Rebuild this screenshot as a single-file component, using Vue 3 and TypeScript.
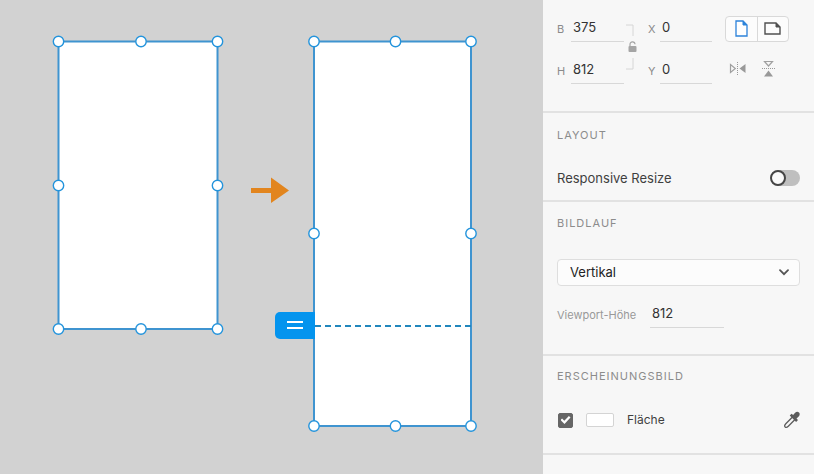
<script setup lang="ts">
import { ref } from 'vue'

interface Artboard {
  x: number
  y: number
  width: number
  height: number
  midX: number
  midY: number
}

const artboards: Artboard[] = [
  { x: 58.5, y: 41.5, width: 159, height: 287.5, midX: 141, midY: 185.5 },
  { x: 314, y: 41.5, width: 157, height: 384.5, midX: 395.5, midY: 233.5 },
]

function handles(a: Artboard): [number, number][] {
  const right = a.x + a.width
  const bottom = a.y + a.height
  return [
    [a.x, a.y], [a.midX, a.y], [right, a.y],
    [a.x, a.midY], [right, a.midY],
    [a.x, bottom], [a.midX, bottom], [right, bottom],
  ]
}

const width = ref('375')
const height = ref('812')
const posX = ref('0')
const posY = ref('0')
const orientation = ref<'portrait' | 'landscape'>('portrait')
const responsive = ref(false)
const scrolling = ref('Vertikal')
const viewportHeight = ref('812')
const fillOn = ref(true)
</script>

<template>
  <div class="app">
    <main class="canvas">
      <svg class="scene" width="543" height="474" viewBox="0 0 543 474" aria-hidden="true">
        <g v-for="(a, i) in artboards" :key="i">
          <rect class="board" :x="a.x" :y="a.y" :width="a.width" :height="a.height" />
          <rect class="outline" :x="a.x" :y="a.y" :width="a.width" :height="a.height" />
        </g>
        <path class="viewport" d="M315 326H471" />
        <path class="arrow" d="M251 188h20v-10.500l18 13-18 12.500v-10h-20z" />
        <g v-for="(a, i) in artboards" :key="'h' + i">
          <circle v-for="([x, y], j) in handles(a)" :key="j" class="handle" :cx="x" :cy="y" r="5.200" />
        </g>
        <path class="grip" d="M315 312v27h-35a5 5 0 0 1-5-5v-17a5 5 0 0 1 5-5z" />
        <path class="grip-lines" d="M287 322h16M287 328h16" />
      </svg>
    </main>

    <aside class="panel">
      <section class="section transform">
        <label for="w">B</label>
        <input id="w" v-model="width" class="field" type="text" />
        <svg class="lock" width="24" height="69" viewBox="0 0 24 69" aria-hidden="true">
          <path d="M2 10h7v11M9 43v11H2" fill="none" stroke="#d6d6d6" />
          <rect x="4.500" y="31" width="8" height="6" rx="1" fill="#a5a5a5" />
          <path d="M6 31v-1.500a2.500 2.500 0 0 1 5-.300" fill="none" stroke="#a5a5a5" stroke-width="1.200" />
        </svg>
        <label for="x">X</label>
        <input id="x" v-model="posX" class="field" type="text" />
        <div class="orient">
          <button type="button" aria-label="Hochformat" :class="{ on: orientation === 'portrait' }" @click="orientation = 'portrait'">
            <svg width="13" height="17" viewBox="0 0 13 17">
              <path d="M1 1h7l4 4v11H1z" fill="#fff" stroke="currentColor" stroke-width="1.300" />
              <path d="M8 1v4h4z" fill="currentColor" stroke="currentColor" />
            </svg>
          </button>
          <button type="button" aria-label="Querformat" :class="{ on: orientation === 'landscape' }" @click="orientation = 'landscape'">
            <svg width="17" height="13" viewBox="0 0 17 13">
              <path d="M1 1h11l4 4v7H1z" fill="none" stroke="currentColor" stroke-width="1.400" />
              <path d="M12 1v4h4z" fill="currentColor" stroke="currentColor" />
            </svg>
          </button>
        </div>
        <label for="h">H</label>
        <input id="h" v-model="height" class="field" type="text" />
        <label for="y">Y</label>
        <input id="y" v-model="posY" class="field" type="text" />
        <div class="flips">
          <button type="button" aria-label="Horizontal spiegeln">
            <svg width="17" height="13" viewBox="0 0 17 13">
              <path d="M1.500 2.500v8l4.800-4z" fill="none" stroke="#a0a0a0" stroke-width="1.200" />
              <path d="M16.500 2v9L10.500 6.500z" fill="#999" />
              <path d="M8.500 0v13" stroke="#999" stroke-dasharray="1 1" />
            </svg>
          </button>
          <button type="button" aria-label="Vertikal spiegeln">
            <svg width="13" height="17" viewBox="0 0 13 17">
              <path d="M2.500 1.500h8L6.500 6z" fill="none" stroke="#a0a0a0" stroke-width="1.200" />
              <path d="M2 16.500h9l-4.500-6z" fill="#999" />
              <path d="M0 8.500h13" stroke="#999" stroke-dasharray="1 1" />
            </svg>
          </button>
        </div>
      </section>

      <section class="section layout">
        <h2>LAYOUT</h2>
        <label class="row toggle-row">
          <span>Responsive Resize</span>
          <input v-model="responsive" class="toggle" type="checkbox" role="switch" />
        </label>
      </section>

      <section class="section scroll">
        <h2>BILDLAUF</h2>
        <div class="select">
          <select v-model="scrolling" aria-label="Bildlauf">
            <option>Vertikal</option>
          </select>
          <svg width="10" height="7" viewBox="0 0 10 7" aria-hidden="true">
            <path d="M1 1.200l4 4 4-4" fill="none" stroke="#555" stroke-width="1.800" stroke-linecap="round" />
          </svg>
        </div>
        <div class="viewport-row">
          <label for="vh">Viewport-Höhe</label>
          <input id="vh" v-model="viewportHeight" class="field" type="text" />
        </div>
      </section>

      <section class="section look">
        <h2>ERSCHEINUNGSBILD</h2>
        <div class="row fill-row">
          <input id="fill" v-model="fillOn" class="tick" type="checkbox" />
          <button class="swatch" type="button" aria-label="Farbe"></button>
          <label for="fill">Fläche</label>
          <button class="picker" type="button" aria-label="Pipette">
            <svg width="16" height="18" viewBox="0 0 16 18">
              <path d="M8.500 6L1.800 12.700c-.9.900-1.300 2.500-.7 3.200.7.600 2.300.2 3.200-.7L11 8.500" fill="none" stroke="#5c5c5c" stroke-width="1.300" />
              <path d="M5.700 4.400l1.900-1.700 1.500 1.300 2-2.200c1.200-1.300 2.900-1.300 3.900-.300s1 2.700-.3 3.900l-2.200 2 1.500 1.700-1.900 1.900z" fill="#5c5c5c" />
            </svg>
          </button>
        </div>
      </section>
    </aside>
  </div>
</template>

<style>
body {
  margin: 0;
}
</style>

<style scoped>
.app {
  display: flex;
  min-height: 100vh;
  font: 13px/16px Inter, "Liberation Sans", sans-serif;
  color: #3f3f3f;
}
.app *,
.app {
  box-sizing: border-box;
}
.canvas {
  flex: 1;
  min-width: 0;
  background: #d2d2d2;
}
.scene {
  display: block;
}
.board {
  fill: #fff;
}
.outline {
  fill: none;
  stroke: #3f94d0;
  stroke-width: 2;
}
.viewport {
  stroke: #2187bd;
  stroke-width: 2;
  stroke-dasharray: 6 4;
}
.arrow {
  fill: #e2851e;
}
.handle {
  fill: #fff;
  stroke: #2494dc;
  stroke-width: 1.4;
}
.grip {
  fill: #0494ee;
}
.grip-lines {
  stroke: #fff;
  stroke-width: 2;
}
.panel {
  flex: 0 0 271px;
  background: #f7f7f7;
}
.section {
  padding: 0 14px;
  border-bottom: 2px solid #e2e2e2;
}
button {
  display: flex;
  align-items: center;
  justify-content: center;
  padding: 0;
  border: 0;
  background: none;
}
h2 {
  margin: 0;
  font-size: 11px;
  font-weight: 400;
  line-height: 14px;
  letter-spacing: 1px;
  color: #8c8c8c;
}
.field {
  width: 100%;
  height: 27px;
  padding: 0 2px 3px;
  border: 0;
  border-bottom: 1px solid #d8d8d8;
  border-radius: 0;
  outline: 0;
  background: none;
  font: inherit;
  color: #333;
}
.transform {
  display: grid;
  grid-template-columns: 14px 53px 24px 12px 52px 13px 64px;
  grid-template-rows: 27px 27px;
  row-gap: 15px;
  align-items: center;
  padding-top: 15px;
  padding-bottom: 27px;
}
.transform label {
  font-size: 11px;
  color: #8a8a8a;
}
.lock {
  grid-row: 1 / 3;
  grid-column: 3;
}
.orient {
  grid-column: 7;
  display: flex;
  height: 26px;
  border: 1px solid #d9d9d9;
  border-radius: 4px;
  background: #fcfcfc;
}
.orient button {
  flex: 1;
  color: #505050;
}
.orient button + button {
  border-left: 1px solid #d9d9d9;
}
.orient .on {
  color: #2d83da;
}
.flips {
  grid-column: 7;
  display: flex;
  gap: 16px;
  padding: 0 0 4px 4px;
}
.layout {
  padding-top: 15px;
  padding-bottom: 12px;
}
.row {
  display: flex;
  align-items: center;
}
.toggle-row {
  justify-content: space-between;
  height: 20px;
  margin-top: 26px;
}
.toggle {
  position: relative;
  appearance: none;
  width: 29px;
  height: 16px;
  margin: 0;
  border-radius: 8px;
  background: #bfbfbf;
}
.toggle::before {
  content: "";
  position: absolute;
  left: -1px;
  top: 0;
  width: 16px;
  height: 16px;
  border: 2px solid #454545;
  border-radius: 50%;
  background: #fafafa;
  box-sizing: border-box;
}
.toggle:checked::before {
  left: 14px;
}
.scroll {
  padding-top: 14px;
  padding-bottom: 26px;
}
.select {
  display: grid;
  align-items: center;
  margin-top: 29px;
}
.select > * {
  grid-area: 1 / 1;
}
.select svg {
  justify-self: end;
  margin-right: 11px;
  pointer-events: none;
}
select {
  appearance: none;
  width: 100%;
  height: 27px;
  padding: 0 12px 1px;
  border: 1px solid #dedede;
  border-radius: 4px;
  background: #fcfcfc;
  font: inherit;
  color: #222;
}
.viewport-row {
  display: grid;
  grid-template-columns: 93px 74px;
  align-items: center;
  margin-top: 15px;
}
.viewport-row label {
  font-size: 11px;
  color: #999;
}
.look {
  padding-top: 13px;
  padding-bottom: 23px;
}
.fill-row {
  height: 20px;
  margin-top: 27px;
  font-size: 12px;
}
.tick {
  appearance: none;
  width: 15px;
  height: 15px;
  margin: 0 13px 0 1px;
  border: 1px solid #666;
  border-radius: 2px;
  display: grid;
  place-items: center;
}
.tick:checked {
  background: #666;
}
.tick:checked::before {
  content: "";
  width: 10px;
  height: 8px;
  background: #fff;
  clip-path: polygon(0 50%, 16% 30%, 38% 60%, 84% 0, 100% 18%, 40% 100%);
}
.swatch {
  width: 28px;
  height: 14px;
  margin-right: 13px;
  border: 1px solid #d4d4d4;
  border-radius: 2px;
  background: #fff;
}
.picker {
  margin-left: auto;
}
</style>
